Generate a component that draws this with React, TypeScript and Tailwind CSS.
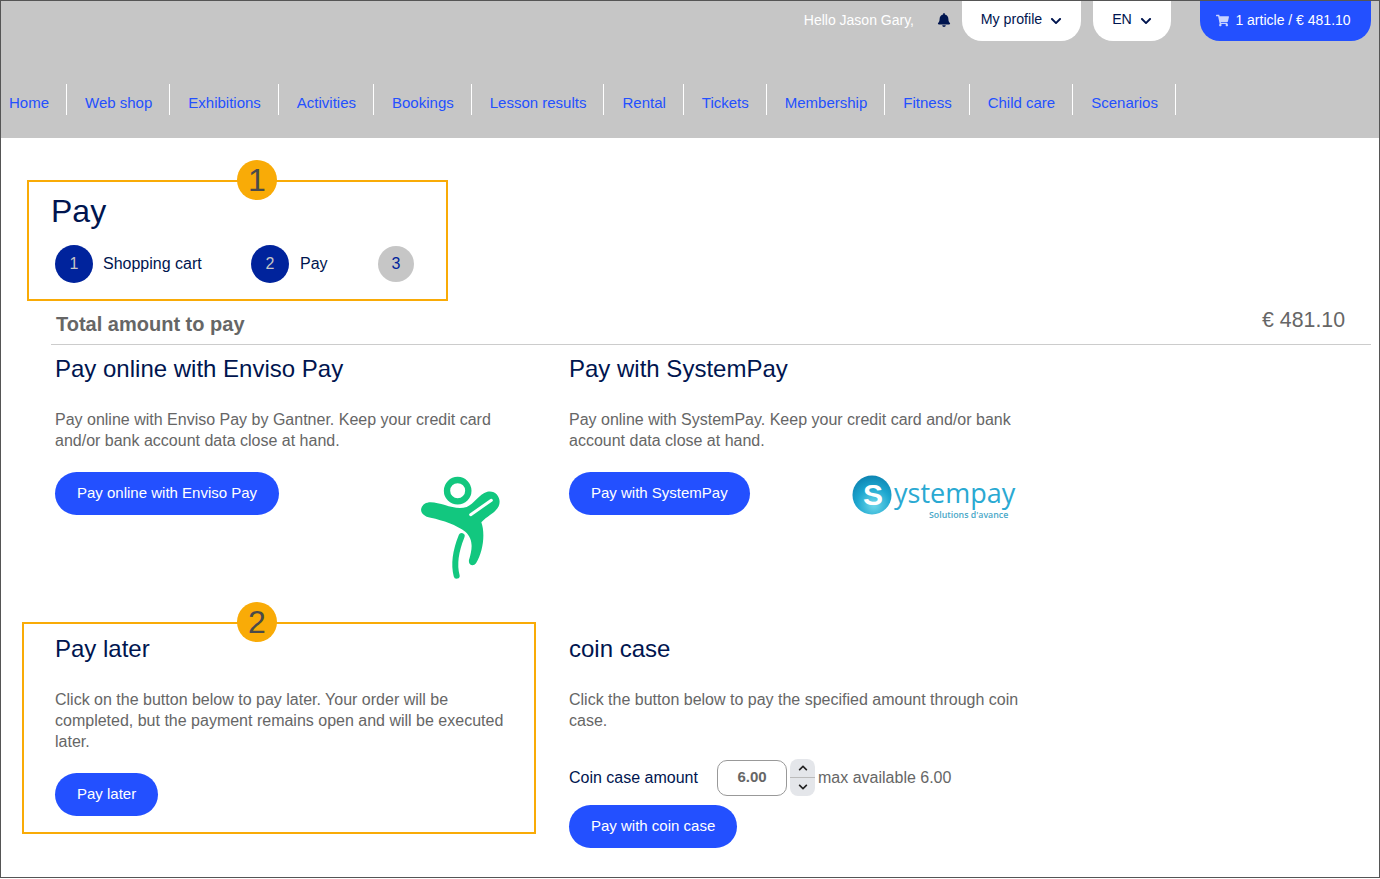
import React from "react";
import { FaBell, FaChevronDown, FaChevronUp, FaShoppingCart } from "react-icons/fa";

const navItems = [
  "Home",
  "Web shop",
  "Exhibitions",
  "Activities",
  "Bookings",
  "Lesson results",
  "Rental",
  "Tickets",
  "Membership",
  "Fitness",
  "Child care",
  "Scenarios",
];

const EnvisoLogo = () => (
  <svg viewBox="0 0 360 360" className="w-[120px] h-[120px] shrink-0">
    <circle cx="173" cy="77" r="32" fill="none" stroke="#12c77f" strokeWidth="19" />
    <path
      d="M92 112C125 112 165 138 200 126C222 116 236 88 262 80C288 74 306 100 296 124C284 146 262 152 244 172C256 205 250 258 228 295C220 306 204 300 207 285C218 250 220 222 196 200C170 180 130 166 92 158C72 155 60 142 64 130C68 118 78 112 92 112Z"
      fill="#12c77f"
    />
    <path d="M212 149L274 106" stroke="#fff" strokeWidth="9" strokeLinecap="round" />
    <path d="M185 213C168 255 160 295 170 332" fill="none" stroke="#12c77f" strokeWidth="18" strokeLinecap="round" />
  </svg>
);

const SystempayLogo = () => (
  <div className="relative w-[168px] h-[50px] shrink-0 mt-[1px]">
    <svg viewBox="0 0 42 42" className="absolute left-[1px] top-[2px] w-[40px] h-[40px]">
      <defs>
        <radialGradient id="sp" cx="0.55" cy="0.75" r="0.8">
          <stop offset="0" stopColor="#6fd8ea" />
          <stop offset="0.55" stopColor="#1ca6cf" />
          <stop offset="1" stopColor="#0b7fae" />
        </radialGradient>
      </defs>
      <circle cx="21" cy="21" r="20.5" fill="url(#sp)" />
    </svg>
    <span className="absolute left-[12px] top-[6px] text-[30px] leading-[32px] font-bold text-white">S</span>
    <span className="absolute left-[43px] top-[5px] text-[27px] leading-[30px] text-[#2aa9d2] font-['Open_Sans',sans-serif]">
      ystempay
    </span>
    <span className="absolute left-[78px] top-[37px] text-[8.8px] leading-[11px] font-semibold text-[#4aa8c8] font-['Open_Sans',sans-serif]">
      Solutions d'avance
    </span>
  </div>
);

const Btn = ({ children }: { children: React.ReactNode }) => (
  <button className="h-[43px] px-[22px] rounded-[22px] bg-[#2350ff] text-white text-[15px] whitespace-nowrap">
    {children}
  </button>
);

const Section = ({ title, text }: { title: string; text: string }) => (
  <>
    <h2 className="h-[48px] flex items-center text-[24px] text-[#00154f]">{title}</h2>
    <p className="mt-[16px] w-[464px] text-[16px] leading-[21px] text-[#666]">{text}</p>
  </>
);

export default function App() {
  return (
    <div className="relative w-[1380px] h-[878px] overflow-hidden bg-white border border-[#555] font-['Liberation_Sans',Arial,sans-serif]">
      <header className="h-[137px] bg-[#c6c6c6]">
        <div className="flex justify-end items-start pr-[8px] h-[40px]">
          <span className="mt-[11px] text-[14px] leading-[17px] text-white">Hello Jason Gary,</span>
          <FaBell className="ml-[23px] mt-[12px] w-[14px] h-[14px] text-[#00154f]" />
          <div className="ml-[11px] w-[119px] h-[40px] pb-[2px] bg-white rounded-b-[20px] flex items-center justify-center gap-[8px] text-[14.2px] text-[#00154f]">
            My profile <FaChevronDown className="w-[12px] h-[12px] mt-[2px]" />
          </div>
          <div className="ml-[12px] w-[78px] h-[40px] pb-[2px] bg-white rounded-b-[20px] flex items-center justify-center gap-[8px] text-[14.2px] text-[#00154f]">
            EN <FaChevronDown className="w-[12px] h-[12px] mt-[2px]" />
          </div>
          <div className="ml-[29px] w-[171px] h-[40px] pb-[2px] pr-[4px] bg-[#2350ff] rounded-b-[20px] flex items-center justify-center gap-[6px] text-[14px] text-white">
            <FaShoppingCart className="w-[13px] h-[13px] text-[#c9d4ff]" /> 1 article / € 481.10
          </div>
        </div>
        <nav className="mt-[43px] flex pl-[8px]">
          {navItems.map((item) => (
            <a
              key={item}
              className="h-[31px] pt-[8px] flex items-center pr-[17px] mr-[18px] border-r border-white text-[15px] text-[#2350ff] whitespace-nowrap"
            >
              {item}
            </a>
          ))}
        </nav>
      </header>

      <main className="pl-[50px] pr-[8px]">
        <h1 className="pt-[55px] text-[32px] leading-[37px] text-[#00154f]">Pay</h1>
        <div className="mt-[15px] flex items-center pl-[4px] text-[16px] text-[#00154f]">
          <div className="w-[196px] flex items-center gap-[10px]">
            <span className="w-[38px] h-[38px] rounded-full bg-[#00239c] text-[#c6c6c6] flex items-center justify-center">1</span>
            Shopping cart
          </div>
          <div className="w-[127px] flex items-center gap-[11px]">
            <span className="w-[38px] h-[38px] rounded-full bg-[#00239c] text-[#c6c6c6] flex items-center justify-center">2</span>
            Pay
          </div>
          <span className="w-[36px] h-[36px] rounded-full bg-[#c6c6c6] text-[#00239c] flex items-center justify-center">3</span>
        </div>
        <div className="mt-[21px] h-[41px] border-b border-[#ccc] flex justify-between text-[#666] text-[20px] pl-[5px] pr-[26px]">
          <span className="font-bold mt-[1px] leading-[24px] pt-[7px]">Total amount to pay</span>
          <span className="leading-[24px] pt-[4px] text-[21.3px]">€ 481.10</span>
        </div>

        <div className="grid grid-cols-[514px_514px] pl-[4px]">
          <div className="h-[280px]">
            <Section
              title="Pay online with Enviso Pay"
              text="Pay online with Enviso Pay by Gantner. Keep your credit card and/or bank account data close at hand."
            />
            <div className="mt-[21px] w-[450px] flex justify-between items-start">
              <Btn>Pay online with Enviso Pay</Btn>
              <div className="-mt-[7px] -mr-[15px]">
                <EnvisoLogo />
              </div>
            </div>
          </div>
          <div className="h-[280px]">
            <Section
              title="Pay with SystemPay"
              text="Pay online with SystemPay. Keep your credit card and/or bank account data close at hand."
            />
            <div className="mt-[21px] w-[450px] flex justify-between items-start">
              <Btn>Pay with SystemPay</Btn>
              <SystempayLogo />
            </div>
          </div>

          <div>
            <Section
              title="Pay later"
              text="Click on the button below to pay later. Your order will be completed, but the payment remains open and will be executed later."
            />
            <div className="mt-[21px]">
              <Btn>Pay later</Btn>
            </div>
          </div>
          <div>
            <Section
              title="coin case"
              text="Click the button below to pay the specified amount through coin case."
            />
            <div className="mt-[28px] flex items-center text-[16px]">
              <span className="w-[148px] text-[#00154f]">Coin case amount</span>
              <div className="w-[70px] h-[36px] rounded-[10px] border border-[#999] flex items-center justify-center font-bold text-[15px] text-[#666]">
                6.00
              </div>
              <div className="ml-[3px] w-[25px] h-[37px] rounded-[8px] bg-[#e4e6ea] flex flex-col text-[#222]">
                <span className="flex-1 flex items-center justify-center border-b border-[#bbb]">
                  <FaChevronUp className="w-[10px] h-[10px]" />
                </span>
                <span className="flex-1 flex items-center justify-center">
                  <FaChevronDown className="w-[10px] h-[10px]" />
                </span>
              </div>
              <span className="ml-[3px] text-[#666]">max available 6.00</span>
            </div>
            <div className="mt-[9px]">
              <Btn>Pay with coin case</Btn>
            </div>
          </div>
        </div>
      </main>

      {/* callouts drawn on top of the page */}
      <div className="absolute left-[26px] top-[179px] w-[421px] h-[121px] border-2 border-[#f9ab07]" />
      <div className="absolute left-[21px] top-[621px] w-[514px] h-[212px] border-2 border-[#f9ab07]" />
      <div className="absolute left-[236px] top-[159px] w-[40px] h-[40px] rounded-full bg-[#f9ab07] text-[#4a4a4a] text-[32px] flex items-center justify-center">1</div>
      <div className="absolute left-[236px] top-[601px] w-[40px] h-[40px] rounded-full bg-[#f9ab07] text-[#4a4a4a] text-[32px] flex items-center justify-center">2</div>
    </div>
  );
}
